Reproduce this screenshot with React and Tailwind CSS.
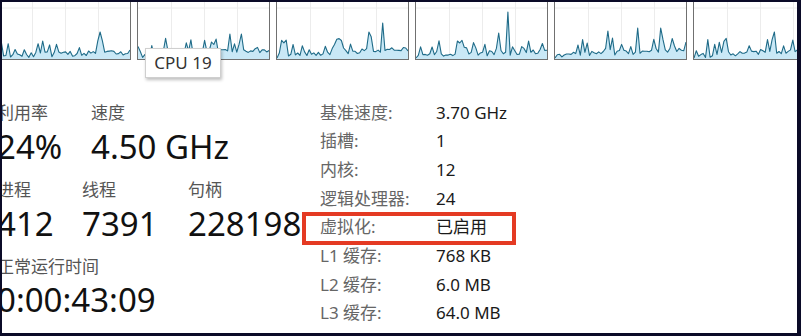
import React from 'react';

const font = { fontFamily: '"Noto Sans", "Noto Sans CJK SC", sans-serif' };

// deterministic noise so the graphs look the same every render
const seeded = (seed) => {
    let s = seed;
    return () => {
        s = (s * 16807) % 2147483647;
        return (s - 1) / 2147483646;
    };
};

const W = 131;
const H = 57;

const makeGraph = (seed, level, extra = {}) => {
    const rnd = seeded(seed);
    const n = 58;
    const pts = [];
    for (let i = 0; i < n; i++) {
        const x = (i * W) / (n - 1);
        let v = rnd() * 5 + level * (i / n) * 5;
        if (rnd() < 0.28) v = 6 + rnd() * (8 + level * 6);
        if (extra[i] !== undefined) v = extra[i];
        pts.push([x, H - 1 - v]);
    }
    const line = pts.map((p, i) => `${i ? 'L' : 'M'}${p[0].toFixed(1)} ${p[1].toFixed(1)}`).join(' ');
    const area = `${line} L${W} ${H} L0 ${H} Z`;
    return { line, area };
};

const graphs = [
    makeGraph(11, 0.6, { 44: 26, 19: 17 }),
    makeGraph(23, 1.1, { 40: 24, 45: 24 }),
    makeGraph(37, 1.3, { 46: 35, 40: 26 }),
    makeGraph(51, 0.8, { 40: 46, 36: 25 }),
    makeGraph(67, 1.2, { 23: 27, 36: 30, 46: 30 }),
    makeGraph(79, 1.1, { 57: 50, 56: 18, 35: 26 }),
];

const GraphPanel = ({ g }) => (
    <div className="w-[133px] h-[58px] shrink-0 border-x border-b border-[#707070] bg-white">
        <svg width={W} height={H} viewBox={`0 0 ${W} ${H}`} className="block">
            <line x1="0" y1="6" x2={W} y2="6" stroke="#ececec" strokeWidth="1" />
            <line x1="33.5" y1="0" x2="33.5" y2={H} stroke="#ececec" strokeWidth="1" />
            <line x1="66.5" y1="0" x2="66.5" y2={H} stroke="#ececec" strokeWidth="1" />
            <line x1="99.5" y1="0" x2="99.5" y2={H} stroke="#ececec" strokeWidth="1" />
            <path d={g.area} fill="#c9e8f6" />
            <path d={g.line} fill="none" stroke="#1f6b88" strokeWidth="1.1" strokeLinejoin="round" />
        </svg>
    </div>
);

const specs = [
    ['基准速度:', '3.70 GHz'],
    ['插槽:', '1'],
    ['内核:', '12'],
    ['逻辑处理器:', '24'],
    ['虚拟化:', '已启用'],
    ['L1 缓存:', '768 KB'],
    ['L2 缓存:', '6.0 MB'],
    ['L3 缓存:', '64.0 MB'],
];

const Stat = ({ label, value, width, gap = 3 }) => (
    <div className="shrink-0" style={width ? { width } : undefined}>
        <div className="text-[17px] leading-[22px] text-[#555]">{label}</div>
        <div className="text-[33px] leading-[40px] text-[#111]" style={{ marginTop: gap }}>{value}</div>
    </div>
);

export default function App() {
    return (
        <div className="w-[801px] h-[336px] bg-[#0b0b28] pl-[2px] pt-[2px] pr-[4px] pb-[3px]" style={font}>
            <div className="relative w-full h-full bg-white overflow-hidden">
                {/* CPU graphs strip */}
                <div className="flex gap-[6px] ml-[-4px]">
                    {graphs.map((g, i) => (
                        <GraphPanel key={i} g={g} />
                    ))}
                </div>

                <div className="flex">
                    {/* big numbers */}
                    <div className="w-[323px] ml-[-5px] shrink-0 pt-[42px]">
                        <div className="flex">
                            <Stat label="利用率" value="24%" width={94} />
                            <Stat label="速度" value="4.50 GHz" />
                        </div>
                        <div className="flex mt-[12px]">
                            <Stat label="进程" value="412" width={85} />
                            <Stat label="线程" value="7391" width={106} />
                            <Stat label="句柄" value="228198" />
                        </div>
                        <div className="mt-[12px]">
                            <Stat label="正常运行时间" value="0:00:43:09" gap={2} />
                        </div>
                    </div>

                    {/* spec table */}
                    <div className="pt-[38px]">
                        {specs.map(([k, v]) => (
                            <div key={k} className="flex h-[28.7px] items-center text-[17px]">
                                <span className="w-[116px] text-[#666]">{k}</span>
                                <span className="text-[#1a1a1a]">{v}</span>
                            </div>
                        ))}
                    </div>
                </div>

                {/* hover tooltip */}
                <div className="absolute left-[143px] top-[46px] w-[76px] h-[30px] flex items-center justify-center bg-white border border-[#cfcfcf] shadow-[1px_2px_3px_rgba(0,0,0,0.25)] text-[17px] text-[#333]">
                    CPU 19
                </div>

                {/* red annotation box */}
                <div className="absolute left-[300px] top-[210px] w-[214px] h-[33px] border-[4px] border-[#e43a23]" />
            </div>
        </div>
    );
}
